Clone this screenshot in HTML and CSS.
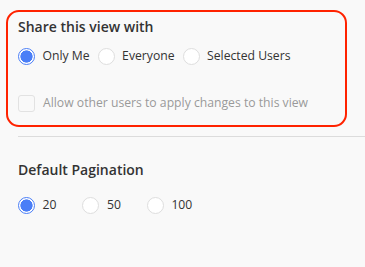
FILE: index.html
```html
<!DOCTYPE html>
<html>
<head>
<meta charset="utf-8">
<link rel="stylesheet" href="styles.css">
</head>
<body>
<div class="page">
  <section class="share-box">
    <h2 class="title">Share this view with</h2>
    <div class="radio-row tight">
      <label class="opt"><span class="radio checked"></span><span class="lbl">Only Me</span></label>
      <label class="opt"><span class="radio"></span><span class="lbl">Everyone</span></label>
      <label class="opt"><span class="radio"></span><span class="lbl">Selected Users</span></label>
    </div>
    <label class="check-row"><span class="checkbox"></span><span class="lbl muted">Allow other users to apply changes to this view</span></label>
  </section>
  <hr class="divider">
  <section class="pag">
    <h2 class="title">Default Pagination</h2>
    <div class="radio-row wide">
      <label class="opt"><span class="radio checked"></span><span class="lbl">20</span></label>
      <label class="opt"><span class="radio"></span><span class="lbl">50</span></label>
      <label class="opt"><span class="radio"></span><span class="lbl">100</span></label>
    </div>
  </section>
</div>
</body>
</html>
```
FILE: styles.css
```css
html, body {
  margin: 0;
  padding: 0;
  background: #f9f9f9;
}
body {
  font-family: "Open Sans", "Liberation Sans", sans-serif;
  color: #333;
  width: 365px;
  height: 267px;
  overflow: hidden;
}
.page {
  padding-top: 10px;
}
.share-box {
  margin: 0 18px 0 6px;
  border: 2.5px solid #ff2200;
  border-radius: 13px;
  padding: 5px 10px 13px 10px;
}
.title {
  margin: 0;
  font-size: 14px;
  font-weight: 600;
  line-height: 20px;
  color: #333;
}
.radio-row {
  display: flex;
  align-items: center;
  margin-top: 10px;
  height: 18px;
}
.tight { gap: 8px; }
.wide { gap: 26px; }
.opt {
  display: flex;
  align-items: center;
  gap: 7.5px;
  font-size: 12.2px;
  line-height: 18px;
}
.radio {
  width: 17px;
  height: 17px;
  box-sizing: border-box;
  border-radius: 50%;
  border: 1px solid #dedede;
  background: #fff;
  flex: none;
}
.radio.checked {
  border: 1.5px solid #4a7ef7;
  background: radial-gradient(circle, #4a7ef7 0 5.8px, #fff 6.4px);
}
.check-row {
  display: flex;
  align-items: center;
  gap: 8px;
  margin-top: 29px;
  font-size: 12.2px;
  line-height: 18px;
}
.checkbox {
  width: 17px;
  height: 17px;
  box-sizing: border-box;
  border: 1px solid #e2e2e2;
  border-radius: 3px;
  background: #f9f9f9;
  flex: none;
}
.muted { color: #9a9a9a; }
.divider {
  margin: 9px 0 0 18px;
  border: 0;
  border-top: 1px solid #dcdcdc;
  height: 0;
}
.pag {
  padding: 23px 18px 0 18px;
}
.pag .radio-row {
  margin-top: 16px;
}
```
